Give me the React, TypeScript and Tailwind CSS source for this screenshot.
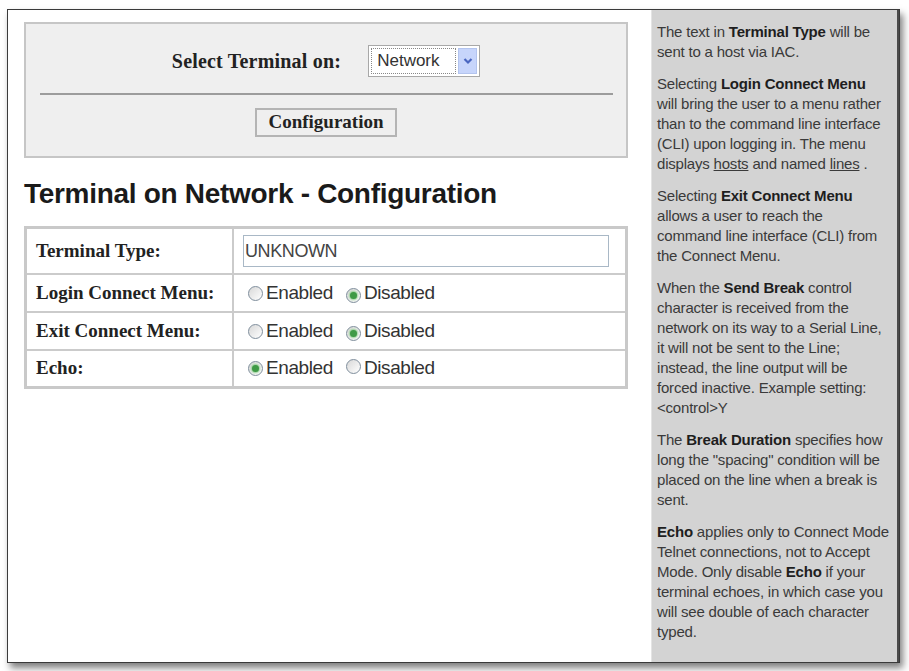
import React from "react";

const sans = { fontFamily: '"Liberation Sans", Arial, sans-serif' };
const serif = { fontFamily: '"Liberation Serif", "Times New Roman", serif' };

function Radio({ checked }: { checked: boolean }) {
  return (
    <span className="relative inline-flex items-center justify-center w-[15px] h-[15px] rounded-full border border-[#7f8e9c] bg-gradient-to-br from-[#d8d8d8] to-white shrink-0">
      {checked && <span className="w-[7px] h-[7px] rounded-full bg-[#3f9a46] shadow-[0_0_2px_1px_rgba(120,200,120,0.8)]" />}
    </span>
  );
}

function RadioPair({ enabled }: { enabled: boolean }) {
  return (
    <div className="flex items-center text-[19px] text-[#333] tracking-[-0.4px]" style={sans}>
      <Radio checked={enabled} />
      <span className="ml-[3px]">Enabled</span>
      <span className="ml-[13px]"><Radio checked={!enabled} /></span>
      <span className="ml-[3px]">Disabled</span>
    </div>
  );
}

const rows: { label: string; h: string; value: "input" | boolean }[] = [
  { label: "Terminal Type:", h: "h-[44px]", value: "input" },
  { label: "Login Connect Menu:", h: "h-[38px]", value: false },
  { label: "Exit Connect Menu:", h: "h-[38px]", value: false },
  { label: "Echo:", h: "h-[37px]", value: true },
];

export default function App() {
  return (
    <div className="w-[909px] h-[671px] bg-white overflow-hidden pt-[9px] pl-[7px]">
      <div className="w-[893px] h-[654px] border border-[#3a3a3a] flex shadow-[3px_5px_7px_rgba(0,0,0,0.5)] bg-white">
        {/* main column */}
        <div className="flex-1 pl-[16px] pt-[12px]">
          <div className="w-[604px] h-[136px] border-2 border-[#c6c6c6] bg-[#efefef] flex flex-col items-center pt-[21px]">
            <div className="flex items-center">
              <span className="text-[20px] font-bold text-[#222] tracking-[0.2px]" style={serif}>Select Terminal on:</span>
              <div className="ml-[27px] w-[112px] h-[32px] border border-[#a8a8a8] bg-white flex items-center p-[2px]">
                <div className="flex-1 h-full border border-dotted border-[#888] flex items-center pl-[5px] text-[17px] text-[#333]" style={sans}>Network</div>
                <div className="ml-[2px] w-[19px] h-full bg-[#c7d5fb] border border-[#b3c4ee] flex items-center justify-center">
                  <svg width="10" height="8" viewBox="0 0 10 8"><path d="M1.5 2 L5 5.5 L8.5 2" stroke="#4a66c0" strokeWidth="2.2" fill="none" /></svg>
                </div>
              </div>
            </div>
            <div className="w-[573px] h-[2px] bg-[#9c9c9c] mt-[16px]" />
            <div className="mt-[13px] w-[142px] h-[29px] border-2 border-[#b4b4b4] bg-[#efefef] flex items-center justify-center text-[19px] font-bold text-[#222]" style={serif}>
              Configuration
            </div>
          </div>

          <h1 className="mt-[18px] text-[28px] font-bold text-[#1a1a1a] leading-[36px] tracking-[-0.3px]" style={sans}>
            Terminal on Network - Configuration
          </h1>

          <div className="mt-[14px] w-[604px] border-[3px] border-[#c9c9c9] flex flex-col">
            {rows.map((r, i) => (
              <div key={r.label} className={`flex ${r.h} ${i > 0 ? "border-t-2 border-[#cbcbcb]" : ""}`}>
                <div className="w-[207px] border-r-2 border-[#cbcbcb] flex items-center pl-[9px] text-[19px] font-bold text-[#222]" style={serif}>
                  {r.label}
                </div>
                <div className="flex-1 flex items-center pl-[14px]">
                  {r.value === "input" ? (
                    <div className="-ml-[5px] w-[366px] h-[32px] border border-[#a9b8c6] bg-white flex items-center pl-[1px] text-[18px] text-[#444] tracking-[-0.4px]" style={sans}>
                      UNKNOWN
                    </div>
                  ) : (
                    <RadioPair enabled={r.value} />
                  )}
                </div>
              </div>
            ))}
          </div>
        </div>

        {/* help sidebar */}
        <div className="w-[248px] h-full bg-[#d3d3d3] border-l border-[#e4e4e4] border-r-2 border-r-[#4a4a4a] pl-[5px] pt-[12px] text-[15px] leading-[20px] text-[#3a3a3a] whitespace-nowrap tracking-[-0.2px] flex flex-col gap-[12px]" style={sans}>
          <p>
            The text in <b className="text-[#1e1e1e]">Terminal Type</b> will be<br />
            sent to a host via IAC.
          </p>
          <p>
            Selecting <b className="text-[#1e1e1e]">Login Connect Menu</b><br />
            will bring the user to a menu rather<br />
            than to the command line interface<br />
            (CLI) upon logging in. The menu<br />
            displays <u>hosts</u> and named <u>lines</u> .
          </p>
          <p>
            Selecting <b className="text-[#1e1e1e]">Exit Connect Menu</b><br />
            allows a user to reach the<br />
            command line interface (CLI) from<br />
            the Connect Menu.
          </p>
          <p>
            When the <b className="text-[#1e1e1e]">Send Break</b> control<br />
            character is received from the<br />
            network on its way to a Serial Line,<br />
            it will not be sent to the Line;<br />
            instead, the line output will be<br />
            forced inactive. Example setting:<br />
            &lt;control&gt;Y
          </p>
          <p>
            The <b className="text-[#1e1e1e]">Break Duration</b> specifies how<br />
            long the "spacing" condition will be<br />
            placed on the line when a break is<br />
            sent.
          </p>
          <p>
            <b className="text-[#1e1e1e]">Echo</b> applies only to Connect Mode<br />
            Telnet connections, not to Accept<br />
            Mode. Only disable <b className="text-[#1e1e1e]">Echo</b> if your<br />
            terminal echoes, in which case you<br />
            will see double of each character<br />
            typed.
          </p>
        </div>
      </div>
    </div>
  );
}
